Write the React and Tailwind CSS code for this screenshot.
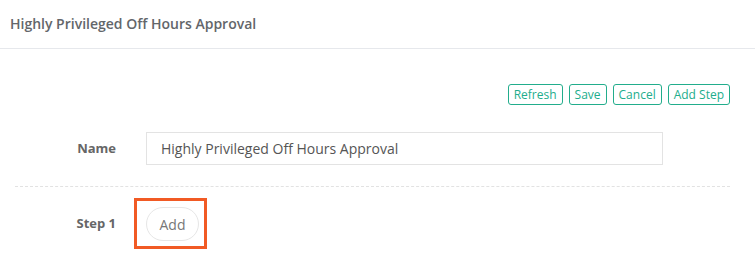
export default function App() {
  const buttons = ['Refresh', 'Save', 'Cancel', 'Add Step'];

  return (
    <div className="w-[755px] h-[270px] bg-white overflow-hidden" style={{ fontFamily: '"Open Sans", sans-serif' }}>
      <div className="h-[49px] border-b border-[#e6e8ec] px-[10px] flex items-center">
        <h1 className="text-[14px] font-semibold text-[#63666a] leading-none -mt-[1px]">Highly Privileged Off Hours Approval</h1>
      </div>

      <div className="pl-[15px] pr-[25px]">
        <div className="flex justify-end gap-[6px] pt-[35px]">
          {buttons.map((b) => (
            <button
              key={b}
              className="h-[21px] px-[5px] border border-[#22ad8c] rounded-[3px] text-[12px] leading-none text-[#22ad8c] bg-white"
            >
              {b}
            </button>
          ))}
        </div>

        <div className="flex items-center mt-[27px]">
          <div className="w-[131px] pr-[30px] text-right text-[13px] font-bold text-[#666]">Name</div>
          <input
            className="w-[517px] h-[33px] border border-[#e3e3e3] px-[14px] text-[14px] text-[#555] outline-none"
            defaultValue="Highly Privileged Off Hours Approval"
          />
        </div>

        <div className="mt-[21px] border-t border-dashed border-[#e2e2e2]" />

        <div className="flex items-center mt-[11px]">
          <div className="w-[119px] pr-[18px] text-right text-[13px] font-bold text-[#666]">Step 1</div>
          <div className="border-[3px] border-[#f15a24] pl-[9px] pr-[5px] pt-[6px] pb-[5px]">
            <button className="w-[53px] h-[34px] rounded-full border border-[#e6e6e6] text-[14px] text-[#777] bg-white">
              Add
            </button>
          </div>
        </div>
      </div>
    </div>
  );
}
